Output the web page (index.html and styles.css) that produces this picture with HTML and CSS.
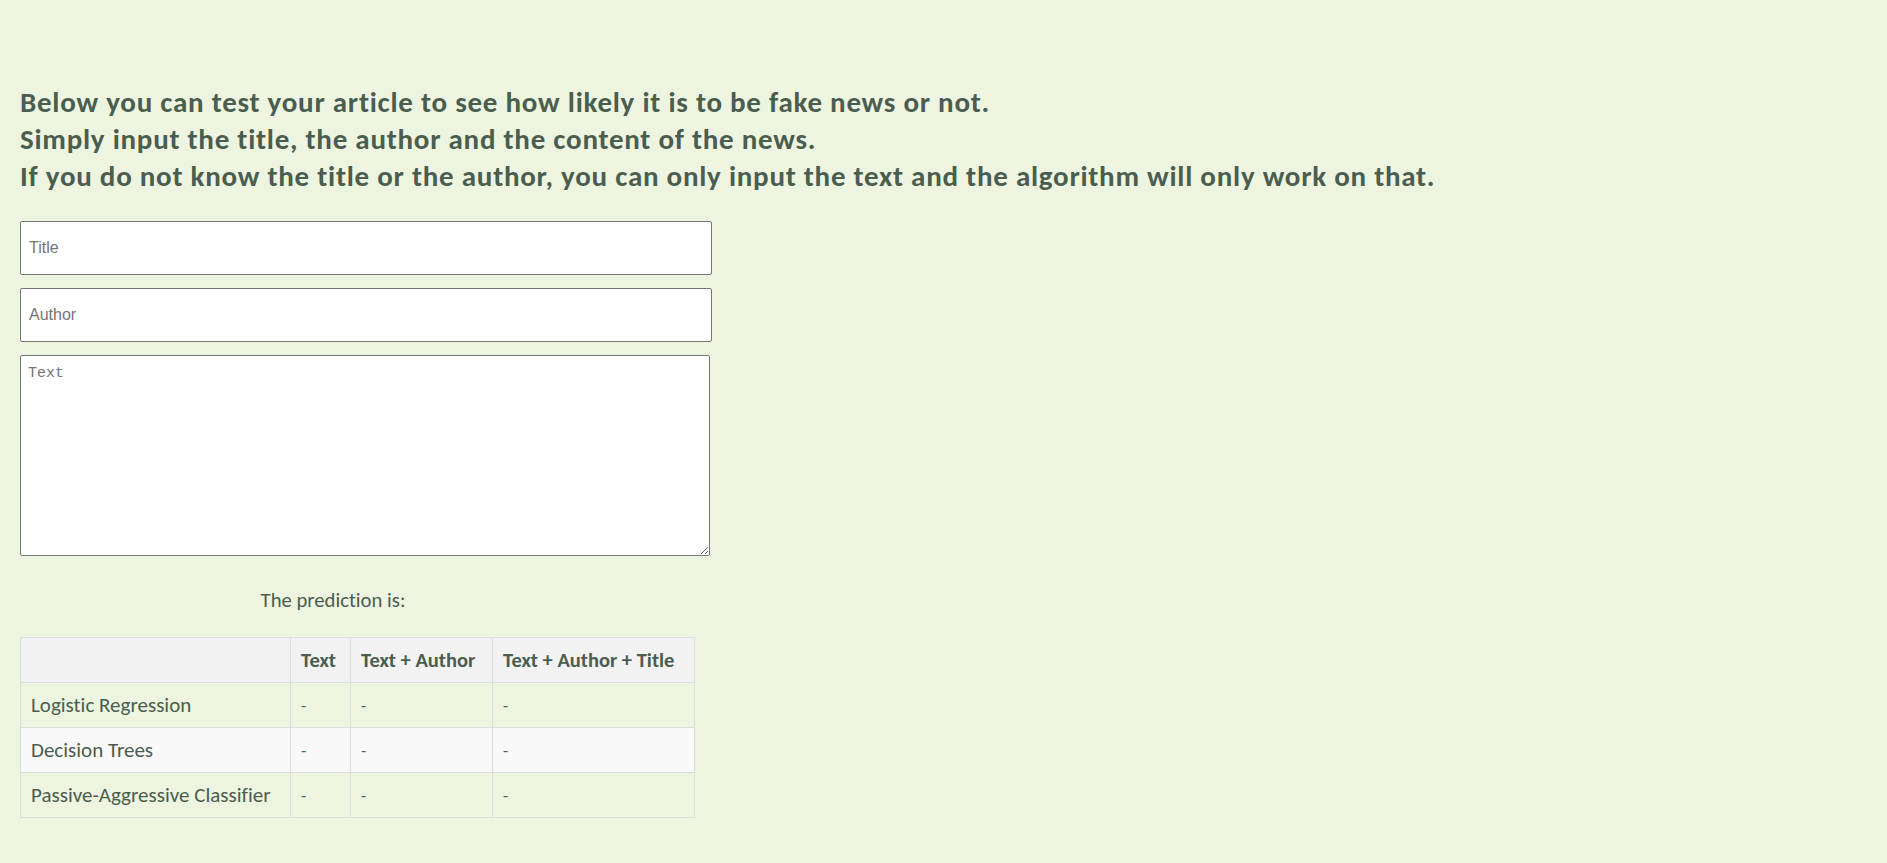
FILE: index.html
```html
<!DOCTYPE html>
<html lang="en">
<head>
<meta charset="utf-8">
<title>Fake news test</title>
<link rel="stylesheet" href="styles.css">
</head>
<body>
<main class="page">
  <h2 class="intro">Below you can test your article to see how likely it is to be fake news or not.<br>Simply input the title, the author and the content of the news.<br>If you do not know the title or the author, you can only input the text and the algorithm will only work on that.</h2>
  <form class="form">
    <input class="field" type="text" placeholder="Title">
    <input class="field" type="text" placeholder="Author">
    <textarea class="area" placeholder="Text"></textarea>
  </form>
  <p class="prediction">The prediction is:</p>
  <table class="results">
    <thead>
      <tr><th class="c-name"></th><th class="c-text">Text</th><th class="c-ta">Text + Author</th><th class="c-tat">Text + Author + Title</th></tr>
    </thead>
    <tbody>
      <tr><td>Logistic Regression</td><td class="dash">-</td><td class="dash">-</td><td class="dash">-</td></tr>
      <tr class="alt"><td>Decision Trees</td><td class="dash">-</td><td class="dash">-</td><td class="dash">-</td></tr>
      <tr><td>Passive-Aggressive Classifier</td><td class="dash">-</td><td class="dash">-</td><td class="dash">-</td></tr>
    </tbody>
  </table>
</main>
</body>
</html>
```
FILE: styles.css
```css
html, body {
  margin: 0;
  padding: 0;
  background: #edf5e1;
}
body {
  font-family: Carlito, Lato, "Open Sans", sans-serif;
  color: #4b5d4f;
  font-variant-ligatures: no-common-ligatures;
}
.page {
  padding: 84px 20px 20px 20px;
}
.intro {
  margin: 0 0 26px 0;
  font-size: 29px;
  line-height: 37px;
  letter-spacing: 0.75px;
  font-weight: 700;
  color: #4b5d4f;
}
.form {
  display: flex;
  flex-direction: column;
  align-items: flex-start;
  gap: 13px;
}
.field {
  box-sizing: border-box;
  width: 692px;
  height: 54px;
  margin: 0;
  padding: 0 8px;
  border: 1px solid #767676;
  border-radius: 2px;
  background: #fff;
  font-family: "Liberation Sans", Arial, sans-serif;
  font-size: 16px;
  color: #333;
}
.field::placeholder { color: #757575; }
.area {
  box-sizing: border-box;
  width: 690px;
  height: 201px;
  margin: 0;
  padding: 8px 7px;
  border: 1px solid #767676;
  border-radius: 2px;
  background: #fff;
  font-family: "Liberation Mono", monospace;
  font-size: 15px;
  line-height: 20px;
  color: #333;
}
.area::placeholder { color: #757575; }
.prediction {
  margin: 31px 0 24px 0;
  width: 626px;
  text-align: center;
  font-size: 20.7px;
  font-weight: 300;
  line-height: 26px;
}
.results {
  border-collapse: collapse;
  font-size: 21px;
}
.results th, .results td {
  border: 1px solid #dddddd;
  height: 45px;
  padding: 0 10px;
  text-align: left;
  box-sizing: border-box;
}
.results th {
  background: #f2f2f2;
  font-weight: 700;
  font-size: 20.5px;
}
.results tr.alt td { background: #f9f9f9; }
.results .dash { font-size: 17px; }
.c-name { width: 270px; }
.c-text { width: 60px; }
.c-ta { width: 142px; }
.c-tat { width: 202px; }
```
